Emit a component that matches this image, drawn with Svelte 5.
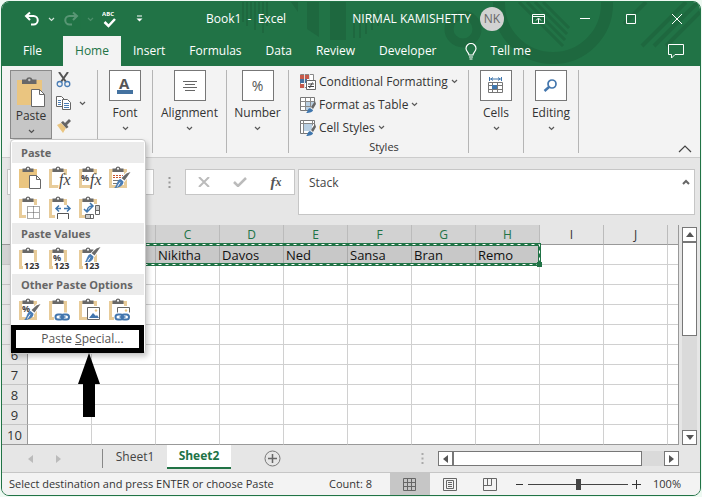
<script lang="ts">
    const tabs = ['File', 'Home', 'Insert', 'Formulas', 'Data', 'Review', 'Developer'];
    const columns = ['A', 'B', 'C', 'D', 'E', 'F', 'G', 'H', 'I', 'J'];
    const rows = [1, 2, 3, 4, 5, 6, 7, 8, 9, 10];
    const names: Record<string, string> = {
        C: 'Nikitha',
        D: 'Davos',
        E: 'Ned',
        F: 'Sansa',
        G: 'Bran',
        H: 'Remo'
    };

    // Columns A to H are inside the copied range
    const selectedCount = 8;

    const pasteMenu = [
        {
            title: 'Paste',
            items: [
                ['all', 'Paste'],
                ['fx', 'Formulas'],
                ['pctfx', 'Formulas and number formatting'],
                ['source', 'Keep source formatting'],
                ['noborder', 'No borders'],
                ['width', 'Keep source column widths'],
                ['transpose', 'Transpose']
            ]
        },
        {
            title: 'Paste Values',
            items: [
                ['values', 'Values'],
                ['pctvalues', 'Values and number formatting'],
                ['srcvalues', 'Values and source formatting']
            ]
        },
        {
            title: 'Other Paste Options',
            items: [
                ['format', 'Formatting'],
                ['link', 'Paste link'],
                ['picture', 'Picture'],
                ['linkpicture', 'Linked picture']
            ]
        }
    ];

    let activeTab = $state('Home');
    let activeSheet = $state('Sheet2');
    let activeView = $state('Normal');
    let zoom = $state(50);
    let formula = $state('Stack');
</script>

{#snippet chevron()}
    <svg class="chevron" width="7" height="5" viewBox="0 0 7 5"><path d="M1 1l2.5 2.5L6 1" fill="none" stroke="currentColor" stroke-width="1.2" /></svg>
{/snippet}

{#snippet brush()}
    <path d="M23 6l-7 9-3-2 6-6z" fill="#fff" stroke="#fff" stroke-width="2" />
    <path d="M22.500 6l-6 8.500-3-2.500 5-4.500z" fill="#6a6a6a" />
    <path d="M12.500 13l3 2.500c0 4-4 6.500-9.500 6.500 3-1.500 2.500-8 6.500-9z" fill="#4a7db5" />
    <path d="M9.500 20.500l2.500-4" stroke="#fff" />
{/snippet}

{#snippet chain()}
    <path d="M6 14.500h17V23H6z" fill="#fff" />
    <g fill="none" stroke="#4376ad" stroke-width="2">
        <rect x="7.500" y="16.500" width="7.500" height="5" rx="2.500" />
        <rect x="13.500" y="16.500" width="7.500" height="5" rx="2.500" />
    </g>
    <path d="M11.500 19h6" stroke="#4376ad" stroke-width="1.500" />
{/snippet}

{#snippet pasteIcon(kind: string)}
    <svg width="24" height="24" viewBox="0 0 24 24" aria-hidden="true">
        {#if kind === 'all'}
            <path d="M1 3h18v19H1z" fill="#eac580" />
        {:else}
            <path d="M2.500 4.500h15v16h-15z" fill="#fff" stroke="#e8cc9a" stroke-width="3" />
        {/if}
        <path d="M4.500 2.500h3a2.600 2.600 0 0 1 5 0h3V6h-11z" fill="#686868" />
        <circle cx="10" cy="2.700" r="1" fill="#fff" />
        {#if kind === 'all'}
            <path d="M11.500 9.500h7l4 4v9h-11z" fill="#fff" stroke="#686868" />
            <path d="M18.500 9.500v4h4" fill="none" stroke="#686868" />
        {:else if kind === 'fx'}
            <path d="M12 9h11v14H10z" fill="#fff" />
            <text class="fx" x="11" y="19">fx</text>
        {:else if kind === 'pctfx'}
            <path d="M14 8h9v15H13z" fill="#fff" />
            <text class="pct" x="3" y="15">%</text>
            <text class="fx" x="12" y="19">fx</text>
        {:else if kind === 'source'}
            <path d="M5 9.500h10M5 11.500h9" stroke="#c6532c" stroke-dasharray="2 1" />
            <path d="M5 14.500h9M5 17.500h5" stroke="#777" />
            {@render brush()}
        {:else if kind === 'noborder'}
            <path d="M8 9h15v14H8z" fill="#fff" />
            <path d="M9.500 10.500h12v12h-12zM9.500 16.500h12M15.500 10.500v12" fill="none" stroke="#555" stroke-dasharray="1 1" />
        {:else if kind === 'width'}
            <path d="M7 9h16v14H7z" fill="#fff" />
            <path d="M8 12.500h5M16 12.500h6M11 9.500l-3 3 3 3M19 9.500l3 3-3 3" fill="none" stroke="#3f76ad" stroke-width="1.500" />
            <path d="M9.500 23v-5.500h11V23" fill="none" stroke="#555" />
        {:else if kind === 'transpose'}
            <path d="M7 8h16v15H7z" fill="#fff" />
            <path d="M9 15.500c0-3 2-5.500 5-5.500M12 7l3 3-3 3M6 13l3 3 3-3" fill="none" stroke="#3f76ad" stroke-width="1.500" />
            <path d="M17.500 9.500h4v9h-4zM7.500 18.500h8v4h-8z" fill="#fff" stroke="#666" />
            <path d="M18 10h3v4h-3zM8 19h4v3H8z" fill="#ccc" />
            <path d="M17.500 14.500h4M12.500 18.500v4" stroke="#666" />
        {:else if kind === 'values' || kind === 'pctvalues' || kind === 'srcvalues'}
            {#if kind === 'pctvalues'}
                <text class="pct" x="5" y="14">%</text>
            {:else if kind === 'srcvalues'}
                <g transform="translate(0 -6)">{@render brush()}</g>
            {/if}
            <path d="M5 15h18v8H5z" fill="#fff" />
            <text class="digits" x="6" y="22">123</text>
        {:else if kind === 'format'}
            <text class="pct" x="4" y="14">%</text>
            {@render brush()}
        {:else if kind === 'link'}
            {@render chain()}
        {:else if kind === 'picture' || kind === 'linkpicture'}
            <path d="M9 8h14v15H9z" fill="#fff" />
            <path d="M9.500 9.500h12v12h-12z" fill="#fff" stroke="#666" />
            <path d="M11 20l4-5 3 3 1-1 2 3z" fill="#4376ad" />
            <circle cx="18" cy="12.500" r="1.200" fill="#eac580" />
            {#if kind === 'linkpicture'}
                {@render chain()}
            {/if}
        {/if}
    </svg>
{/snippet}

<div class="window">
    <header>
        <svg class="pattern" width="470" height="65" viewBox="0 0 470 65" aria-hidden="true">
            <g fill="none" stroke="#1e683f">
                <path d="M13 0v20M17 0v24M21 0v18M25 0v28M29 0v22M33 0v31M37 0v24" stroke-width="2" />
                <path d="M124 12v24M130 10v26M136 8v24M142 8v20M148 8v16" stroke-width="2" />
                <circle cx="233" cy="27" r="14" stroke-width="9" />
                <circle cx="323" cy="2" r="54" stroke-width="12" />
                <path d="M289 0l44 44M297 0l38 38M305 0l32 32M313 0l26 26" stroke-width="3" />
                <path d="M412 44l44-44M424 44l44-44M436 44l34-34M394 22l22-22" stroke-width="4" />
            </g>
            <path d="M61 0h7v10zM77 0h12v35l-12-8zM100 0h16v38h-16z" fill="#1e683f" />
        </svg>
        <div class="title-bar">
            <div class="quick">
                <button aria-label="Undo">
                    <svg width="16" height="16" viewBox="0 0 16 16"><path d="M6 1.500L2 5l4 4M2 5h7.500a4 4 0 0 1 0 8.500H7" fill="none" stroke="#fff" stroke-width="2" /></svg>
                </button>
                <button class="more" aria-label="Undo history">{@render chevron()}</button>
                <button class="dim" aria-label="Redo">
                    <svg width="16" height="16" viewBox="0 0 16 16"><path d="M10 1.500L14 5l-4 4M14 5H6.500a4 4 0 0 0 0 8.500H9" fill="none" stroke="#fff" stroke-width="2" /></svg>
                </button>
                <button class="more dim" aria-label="Redo history">{@render chevron()}</button>
                <button aria-label="Spelling">
                    <svg width="16" height="18" viewBox="0 0 16 18"><text x="0" y="6" class="abc">ABC</text><path d="M2.500 12l4 4L13 9" fill="none" stroke="#fff" stroke-width="2.500" /></svg>
                </button>
                <button class="customize" aria-label="Customize toolbar">
                    <svg width="7" height="8" viewBox="0 0 7 8"><path d="M1 1h5" stroke="#fff" /><path d="M.5 3.500h6l-3 3z" fill="#fff" /></svg>
                </button>
            </div>
            <span class="doc">Book1&nbsp; -&nbsp; Excel</span>
            <span class="user">NIRMAL KAMISHETTY</span>
            <span class="avatar">NK</span>
            <div class="controls">
                <button aria-label="Ribbon display options">
                    <svg width="14" height="12" viewBox="0 0 14 12"><path d="M.5 1.500h12v9H.5zM.5 3.500h12M6.500 10V5.500M4 7.500L6.500 5 9 7.500" fill="none" stroke="#fff" /></svg>
                </button>
                <button aria-label="Minimize">
                    <svg width="10" height="10" viewBox="0 0 10 10"><path d="M0 4.500h10" stroke="#fff" /></svg>
                </button>
                <button aria-label="Maximize">
                    <svg width="10" height="10" viewBox="0 0 10 10"><path d="M.5.5h9v9h-9z" fill="none" stroke="#fff" /></svg>
                </button>
                <button aria-label="Close">
                    <svg width="10" height="10" viewBox="0 0 10 10"><path d="M0 0l10 10M10 0L0 10" stroke="#fff" /></svg>
                </button>
            </div>
        </div>
        <nav class="tabs">
            {#each tabs as tab}
                <button class="tab" class:active={tab === activeTab} onclick={() => (activeTab = tab)}>{tab}</button>
            {/each}
            <button class="tell">
                <svg width="12" height="17" viewBox="0 0 12 17"><path d="M4 12C4 9.500 1 8.500 1 5.500a5 5 0 0 1 10 0C11 8.500 8 9.500 8 12zM4 14h4M4.500 16h3" fill="none" stroke="#fff" stroke-width="1.200" /></svg>
                Tell me
            </button>
            <button class="comments" aria-label="Comments">
                <svg width="17" height="16" viewBox="0 0 17 16"><path d="M.5 1.500h15v10H7L3.500 15v-3.500h-3z" fill="none" stroke="#fff" /></svg>
            </button>
        </nav>
    </header>

    <section class="ribbon" aria-label="Home ribbon">
        <div class="group clipboard">
            <div class="paste-wrap">
                <button class="paste">
                    <svg width="30" height="32" viewBox="0 0 30 32"><path d="M1 4h25v25H1z" fill="#eac580" /><path d="M6 3.500h4a3.500 3.500 0 0 1 6.500 0h4V8H6z" fill="#686868" /><circle cx="13.300" cy="4" r="1.200" fill="#c6c6c6" /><path d="M15.500 13.500h8l5 5v12h-13z" fill="#fff" stroke="#686868" /><path d="M23.500 13.500v5h5" fill="none" stroke="#686868" /></svg>
                    <span>Paste</span>
                    {@render chevron()}
                </button>
                <div class="menu" role="menu">
                    {#each pasteMenu as section}
                        <h2>{section.title}</h2>
                        <div class="options">
                            {#each section.items as [kind, label]}
                                <button role="menuitem" aria-label={label}>{@render pasteIcon(kind)}</button>
                            {/each}
                        </div>
                    {/each}
                    <button class="special" role="menuitem"><span>Paste <u>S</u>pecial...</span></button>
                    <svg class="arrow" width="22" height="64" viewBox="0 0 22 64" aria-hidden="true"><path d="M11 0l11 31h-5v33H5V31H0z" /></svg>
                </div>
            </div>
            <div class="clip-tools">
                <button aria-label="Cut">
                    <svg width="16" height="16" viewBox="0 0 16 16"><path d="M3 0l7 10M12 0L5 10" stroke="#555" stroke-width="2" /><g fill="none" stroke="#4a7db5" stroke-width="1.300"><circle cx="3.700" cy="12" r="2.500" /><circle cx="11.300" cy="12" r="2.500" /></g></svg>
                </button>
                <button aria-label="Copy">
                    <svg width="16" height="16" viewBox="0 0 16 16"><path d="M.5 1.500h5l3 3v7h-8z" fill="#fff" stroke="#666" /><path d="M2 5.500h3M2 7.500h3M2 9.500h3" stroke="#4a7db5" /><path d="M6.500 4.500h5l3 3v7h-8z" fill="#fff" stroke="#666" /><path d="M8 8.500h5M8 10.500h5M8 12.500h5" stroke="#4a7db5" /></svg>
                    {@render chevron()}
                </button>
                <button aria-label="Format painter">
                    <svg width="16" height="16" viewBox="0 0 16 16"><path d="M1 7l4-2 5 5-3 5z" fill="#eac580" /><path d="M5 4.500l2-1.500 2 2L13 1l2 2-4 4 1.500 2-2 1.500z" fill="#666" /></svg>
                </button>
            </div>
        </div>

        <div class="group">
            <button class="big">
                <span class="box"><svg width="20" height="20" viewBox="0 0 20 20"><text x="4" y="13" class="letter">A</text><path d="M2 14h16v4H2z" fill="#4472a0" /></svg></span>
                Font {@render chevron()}
            </button>
        </div>
        <div class="group wide">
            <button class="big">
                <span class="box"><svg width="16" height="14" viewBox="0 0 16 14"><path d="M1 2.500h14M3 5.500h10M1 8.500h14M3 11.500h10" stroke="#666" /></svg></span>
                Alignment {@render chevron()}
            </button>
        </div>
        <div class="group number">
            <button class="big">
                <span class="box percent">%</span>
                Number {@render chevron()}
            </button>
        </div>

        <div class="group styles">
            <button>
                <svg width="16" height="16" viewBox="0 0 16 16"><path d="M.5.5h13v13H.5z" fill="#fff" stroke="#888" /><path d="M0 1h9v4H0zM0 10h5v4H0z" fill="#c65a4a" /><path d="M0 5h7v4H0z" fill="#4472a0" /><path d="M4.500 0v14M9.500 0v6" stroke="#ddd" /><path d="M6.500 6.500h9v9h-9z" fill="#fff" stroke="#666" /><path d="M8 10h6M8 12.500h6M12.500 8.500l-3 5.500" stroke="#444" /></svg>
                Conditional Formatting {@render chevron()}
            </button>
            <button>
                <svg width="16" height="16" viewBox="0 0 16 16"><path d="M.5.5h14v13H.5z" fill="#fff" stroke="#777" /><path d="M5 4h9v9H5z" fill="#b9cfe2" /><path d="M.5 4.500h14M.5 9.500h14M5.500.5v13M10.500.5v13" stroke="#888" /><path d="M16 4l-6 7-2 5h8z" fill="#f3f3f3" /><path d="M15 4l-4 6 2 2 3-5z" fill="#666" /><path d="M10 11l3 2c0 2-3 3-7 3 2-1 1-4 4-5z" fill="#3f76ad" /></svg>
                Format as Table {@render chevron()}
            </button>
            <button>
                <svg width="16" height="16" viewBox="0 0 16 16"><path d="M.5.5h14v13H.5z" fill="#fff" stroke="#777" /><path d="M4 4h8v7H4z" fill="#b9cfe2" /><path d="M.5 3.500h14M3.500.5v13M12.500.5v5" stroke="#888" /><path d="M16 4l-6 7-2 5h8z" fill="#f3f3f3" /><path d="M15 4l-4 6 2 2 3-5z" fill="#666" /><path d="M10 11l3 2c0 2-3 3-7 3 2-1 1-4 4-5z" fill="#3f76ad" /></svg>
                Cell Styles {@render chevron()}
            </button>
            <span class="caption">Styles</span>
        </div>

        <div class="group">
            <button class="big">
                <span class="box"><svg width="16" height="17" viewBox="0 0 16 17"><path d="M1.500 0v4M13.500 0v4M2 2h11M5 .5L3 2l2 1.500M10 .5L12 2l-2 1.500" fill="none" stroke="#3f76ad" /><path d="M.5 5.500h14v10H.5zM.5 8.500h14M.5 12.500h14M4.500 5.500v10M9.500 5.500v10" fill="none" stroke="#777" /><path d="M4 8h5v4H4z" fill="#3f76ad" /></svg></span>
                Cells {@render chevron()}
            </button>
        </div>
        <div class="group">
            <button class="big">
                <span class="box"><svg width="16" height="16" viewBox="0 0 16 16"><circle cx="9" cy="6" r="4" fill="none" stroke="#4376ad" stroke-width="1.700" /><path d="M6 9l-4.500 4" stroke="#4376ad" stroke-width="2.500" /></svg></span>
                Editing {@render chevron()}
            </button>
        </div>
        <button class="collapse" aria-label="Collapse the ribbon">
            <svg width="14" height="8" viewBox="0 0 14 8"><path d="M1 7l6-6 6 6" fill="none" stroke="#444" stroke-width="1.200" /></svg>
        </button>
    </section>

    <section class="formula-bar">
        <input class="name-box" aria-label="Name box" />
        <svg class="dots" width="3" height="11" viewBox="0 0 3 11"><path d="M1.500 0v11" stroke="#999" stroke-width="2" stroke-dasharray="2 2.500" /></svg>
        <div class="entry">
            <button aria-label="Cancel"><svg width="12" height="10" viewBox="0 0 12 10"><path d="M1 0l10 10M11 0L1 10" stroke="#bbb" stroke-width="2" /></svg></button>
            <button aria-label="Enter"><svg width="14" height="10" viewBox="0 0 14 10"><path d="M1 5l4 4 8-8" fill="none" stroke="#bbb" stroke-width="2.500" /></svg></button>
            <button class="insert-fn" aria-label="Insert function">f<small>x</small></button>
        </div>
        <div class="formula">
            <textarea aria-label="Formula" bind:value={formula}></textarea>
            <button aria-label="Collapse formula bar"><svg width="8" height="6" viewBox="0 0 8 6"><path d="M1 5l3-3 3 3" fill="none" stroke="#666" stroke-width="2" /></svg></button>
        </div>
    </section>

    <main>
        <div class="grid">
            <table>
                <thead>
                    <tr>
                        <th class="corner"></th>
                        {#each columns as col, i}
                            <th scope="col" class:selected={i < selectedCount}>{col}</th>
                        {/each}
                        <th class="rest"></th>
                    </tr>
                </thead>
                <tbody>
                    {#each rows as row}
                        <tr>
                            <th scope="row" class:selected={row === 1}>{row}</th>
                            {#each columns as col, i}
                                <td class:selected={row === 1 && i < selectedCount}>{row === 1 ? (names[col] ?? '') : ''}</td>
                            {/each}
                            <td></td>
                        </tr>
                    {/each}
                </tbody>
            </table>
            <svg class="ants" width="518" height="26" viewBox="0 0 518 26" aria-hidden="true">
                <g fill="none">
                    <rect x="2.500" y="2.500" width="512" height="20" stroke="#217346" stroke-width="3" />
                    <rect x="2.500" y="2.500" width="512" height="20" stroke="#fff" stroke-dasharray="3 4" />
                </g>
                <path d="M512 20h5v5h-5z" fill="#217346" />
            </svg>
        </div>
        <div class="vscroll">
            <button aria-label="Scroll up"><svg width="8" height="5" viewBox="0 0 8 5"><path d="M0 5l4-5 4 5z" fill="#555" /></svg></button>
            <div class="thumb"></div>
            <button class="end" aria-label="Scroll down"><svg width="8" height="5" viewBox="0 0 8 5"><path d="M0 0l4 5 4-5z" fill="#555" /></svg></button>
        </div>
    </main>

    <section class="sheet-bar">
        <div class="sheet-nav">
            <button aria-label="Previous sheet"><svg width="5" height="8" viewBox="0 0 5 8"><path d="M5 0v8L0 4z" fill="#bbb" /></svg></button>
            <button aria-label="Next sheet"><svg width="5" height="8" viewBox="0 0 5 8"><path d="M0 0v8l5-4z" fill="#bbb" /></svg></button>
        </div>
        {#each ['Sheet1', 'Sheet2'] as sheet}
            <button class="sheet" class:active={sheet === activeSheet} onclick={() => (activeSheet = sheet)}>{sheet}</button>
        {/each}
        <button class="add" aria-label="New sheet">
            <svg width="17" height="17" viewBox="0 0 17 17"><circle cx="8.500" cy="8.500" r="7.500" fill="none" stroke="#777" /><path d="M4 8.500h9M8.500 4v9" stroke="#666" stroke-width="1.500" /></svg>
        </button>
        <svg class="dots" width="3" height="11" viewBox="0 0 3 11"><path d="M1.500 0v11" stroke="#aaa" stroke-width="2" stroke-dasharray="2 2.500" /></svg>
        <div class="hscroll">
            <button aria-label="Scroll left"><svg width="5" height="8" viewBox="0 0 5 8"><path d="M5 0v8L0 4z" fill="#555" /></svg></button>
            <div class="thumb"></div>
            <button class="end" aria-label="Scroll right"><svg width="5" height="8" viewBox="0 0 5 8"><path d="M0 0v8l5-4z" fill="#555" /></svg></button>
        </div>
    </section>

    <footer>
        <span class="message">Select destination and press ENTER or choose Paste</span>
        <span class="count">Count: 8</span>
        <div class="views">
            <button class:active={activeView === 'Normal'} aria-label="Normal" onclick={() => (activeView = 'Normal')}>
                <svg width="14" height="13" viewBox="0 0 14 13"><path d="M.5.5h12v12H.5zM.5 4.500h12M.5 8.500h12M4.500.5v12M8.500.5v12" fill="none" stroke="#666" /></svg>
            </button>
            <button class:active={activeView === 'Layout'} aria-label="Page layout" onclick={() => (activeView = 'Layout')}>
                <svg width="14" height="13" viewBox="0 0 14 13"><path d="M.5.5h13v12H.5zM3.500 2.500h7v8h-7zM5 4.500h4M5 6.500h4M5 8.500h4" fill="none" stroke="#666" /></svg>
            </button>
            <button class:active={activeView === 'Break'} aria-label="Page break preview" onclick={() => (activeView = 'Break')}>
                <svg width="14" height="13" viewBox="0 0 14 13"><path d="M.5.5h13v12H.5zM.5 7.500h8V.5M4.500.5v7" fill="none" stroke="#666" /></svg>
            </button>
        </div>
        <div class="zoom">
            <button aria-label="Zoom out"><svg width="9" height="9" viewBox="0 0 9 9"><path d="M1 4.500h7" stroke="#333" /></svg></button>
            <input type="range" aria-label="Zoom" min="0" max="100" bind:value={zoom} />
            <button aria-label="Zoom in"><svg width="9" height="9" viewBox="0 0 9 9"><path d="M0 4.500h9M4.500 0v9" stroke="#333" /></svg></button>
        </div>
        <span class="percent-label">{zoom * 2}%</span>
    </footer>
</div>

<style>
    :global(body) {
        background: #eef9f2;
    }

    .window {
        margin: 1px;
        border: 1px solid #217346;
        border-radius: 8px;
        overflow: hidden;
        background: #e6e6e6;
        font-family: 'Open Sans', 'Noto Sans', sans-serif;
        font-size: 12px;
        line-height: 16px;
        color: #333;
    }

    button {
        display: flex;
        align-items: center;
        justify-content: center;
        padding: 0;
        border: 0;
        background: none;
        color: inherit;
        font: inherit;
        white-space: nowrap;
    }

    svg {
        flex: none;
    }

    /* Title bar and tabs */
    header {
        position: relative;
        background: #217346;
        color: #fff;
    }

    .pattern {
        position: absolute;
        top: 0;
        right: 0;
    }

    .title-bar {
        position: relative;
        display: flex;
        align-items: center;
        height: 34px;
    }

    .quick {
        display: flex;
        align-items: center;
        width: 204px;
        padding-left: 22px;
        box-sizing: border-box;
    }

    .more {
        width: 23px;
    }

    .dim {
        opacity: 0.25;
    }

    .customize {
        margin-left: 18px;
    }

    .abc {
        font: bold 6px 'Open Sans', sans-serif;
        fill: #fff;
    }

    .user {
        margin-left: auto;
    }

    .avatar {
        width: 24px;
        margin-left: 9px;
        border-radius: 50%;
        background: #d2d2d2;
        color: #666;
        line-height: 24px;
        text-align: center;
    }

    .controls {
        display: flex;
        margin-left: 12px;
    }

    .controls button {
        width: 46px;
        height: 32px;
    }

    .tabs {
        position: relative;
        display: flex;
        height: 30px;
    }

    .tab {
        padding: 0 12px;
    }

    .tab:first-child {
        width: 61px;
        padding: 0;
    }

    .tab.active {
        width: 58px;
        padding: 0;
        background: #f3f3f3;
        color: #217346;
    }

    .tell {
        gap: 14px;
        margin-left: 16px;
    }

    .comments {
        margin: 0 15px 0 auto;
    }

    /* Ribbon */
    .ribbon {
        display: flex;
        height: 92px;
        padding: 4px 0;
        box-sizing: border-box;
        border-bottom: 1px solid #ccc;
        background: #f3f3f3;
    }

    .chevron {
        opacity: 0.8;
    }

    .group {
        width: 55px;
        box-sizing: border-box;
        border-right: 1px solid #b5b5b5;
    }

    .group.clipboard {
        display: flex;
        width: 96px;
        padding-left: 8px;
    }

    .group.wide {
        width: 74px;
    }

    .group.number {
        width: 62px;
    }

    .big {
        flex-direction: column;
        width: 100%;
    }

    .big .chevron,
    .paste .chevron {
        margin-top: 5px;
    }

    .box {
        display: flex;
        align-items: center;
        justify-content: center;
        width: 30px;
        height: 29px;
        margin-bottom: 4px;
        border: 1px solid #777;
        background: #fff;
    }

    .box.percent {
        color: #555;
        font-size: 14px;
    }

    .letter {
        font: bold 15px 'Open Sans', sans-serif;
        fill: #555;
    }

    .paste-wrap {
        position: relative;
    }

    .paste {
        flex-direction: column;
        width: 42px;
        height: 69px;
        border: 1px solid #8a8a8a;
        background: #c6c6c6;
    }

    .clip-tools {
        display: flex;
        flex-direction: column;
        gap: 7px;
        padding: 2px 0 0 4px;
    }

    .clip-tools button {
        gap: 7px;
        justify-content: flex-start;
    }

    .styles {
        display: flex;
        flex-direction: column;
        align-items: flex-start;
        width: 180px;
        padding-left: 11px;
    }

    .styles button {
        gap: 3px;
        height: 23px;
    }

    .caption {
        width: 100%;
        margin-top: auto;
        font-size: 11px;
        line-height: 12px;
        text-align: center;
    }

    .collapse {
        align-self: flex-end;
        margin: 0 8px 0 auto;
    }

    /* Paste menu */
    .menu {
        position: absolute;
        top: 69px;
        left: 0;
        z-index: 2;
        width: 136px;
        box-sizing: border-box;
        padding: 2px 0 0;
        border: 1px solid #c8c8c8;
        border-radius: 4px;
        background: #fff;
        box-shadow: 2px 3px 5px rgba(0, 0, 0, 0.2);
    }

    h2 {
        margin: 0 1px;
        padding-left: 9px;
        background: #ebebeb;
        color: #666;
        font-size: 11px;
        line-height: 21px;
    }

    .options {
        display: flex;
        flex-wrap: wrap;
        padding-left: 4px;
    }

    .options button {
        width: 30px;
        height: 30px;
    }

    .fx {
        font: italic 16px / 1 'Liberation Serif', serif;
        fill: #444;
    }

    .pct {
        font: bold 9px / 1 'Open Sans', sans-serif;
        fill: #444;
    }

    .digits {
        font: bold 9px / 1 'Open Sans', sans-serif;
        fill: #333;
    }

    .special {
        width: 133px;
        height: 28px;
        padding-left: 10px;
        border: 5px solid #000;
        color: #555;
    }

    .arrow {
        position: absolute;
        top: 100%;
        left: 67px;
    }

    /* Formula bar */
    .formula-bar {
        display: flex;
        align-items: flex-start;
        padding: 11px 5px 10px;
    }

    .name-box {
        width: 147px;
        height: 26px;
        padding: 0;
        box-sizing: border-box;
        border: 1px solid #c6c6c6;
        background: #fff;
    }

    .formula-bar .dots {
        margin: 8px 14px;
    }

    .entry {
        display: flex;
        justify-content: space-around;
        width: 110px;
        height: 26px;
        box-sizing: border-box;
        border: 1px solid #c6c6c6;
        background: #fff;
    }

    .entry button {
        width: 36px;
    }

    .insert-fn {
        color: #555;
        font: italic bold 15px 'Liberation Serif', serif;
    }

    .insert-fn small {
        font-size: 12px;
    }

    .formula {
        display: flex;
        flex: 1;
        align-items: flex-start;
        height: 46px;
        margin-left: 3px;
        box-sizing: border-box;
        border: 1px solid #c6c6c6;
        background: #fff;
    }

    textarea {
        flex: 1;
        height: 44px;
        padding: 5px 10px;
        box-sizing: border-box;
        border: 0;
        outline: 0;
        resize: none;
        background: none;
        color: #444;
        font: inherit;
    }

    .formula button {
        margin: 9px 4px;
    }

    /* Worksheet */
    main {
        display: flex;
    }

    .grid {
        position: relative;
        flex: 1;
        border-right: 1px solid #999;
    }

    table {
        width: 100%;
        table-layout: fixed;
        border-collapse: separate;
        border-spacing: 0;
    }

    th,
    td {
        width: 64px;
        height: 20px;
        padding: 0;
        box-sizing: border-box;
        overflow: hidden;
        font-weight: normal;
        white-space: nowrap;
    }

    td {
        padding-left: 2px;
        border-right: 1px solid #d0d0d0;
        border-bottom: 1px solid #d0d0d0;
        background: #fff;
        color: #111;
        font-size: 13px;
    }

    td:last-child {
        border-right: 0;
    }

    tbody tr:last-child th,
    tbody tr:last-child td {
        border-bottom-color: #999;
    }

    thead th {
        border-right: 1px solid #bbb;
        border-bottom: 1px solid #999;
    }

    th.corner {
        width: 26px;
    }

    thead th.rest {
        width: auto;
        border-right: 0;
    }

    tbody th {
        border-right: 1px solid #999;
        border-bottom: 1px solid #c4c4c4;
        font-size: 13px;
    }

    th.selected {
        background: #d2d2d2;
        color: #217346;
    }

    td.selected {
        border-right-color: #aaa;
        background: #c8c8c8;
    }

    .ants {
        position: absolute;
        top: 17px;
        left: 23px;
    }

    .vscroll {
        display: flex;
        flex-direction: column;
        width: 15px;
        margin: 2px 3px 0 3px;
        background: #dadada;
    }

    .vscroll button,
    .hscroll button,
    .thumb {
        width: 15px;
        height: 15px;
        box-sizing: border-box;
        border: 1px solid #777;
        background: #fff;
    }

    .vscroll .thumb {
        height: 94px;
    }

    .vscroll .end {
        margin-top: auto;
    }

    /* Sheet tabs */
    .sheet-bar {
        display: flex;
        align-items: center;
        height: 27px;
        border-bottom: 1px solid #c6c6c6;
    }

    .sheet-nav {
        display: flex;
        gap: 23px;
        width: 101px;
        height: 19px;
        padding-left: 26px;
        box-sizing: border-box;
        border-right: 1px solid #888;
    }

    .sheet {
        width: 64px;
        height: 24px;
        align-self: flex-start;
        color: #444;
        font-size: 12px;
    }

    .sheet.active {
        border-bottom: 2px solid #217346;
        background: #fff;
        color: #217346;
        font-weight: bold;
    }

    .add {
        margin-left: 33px;
    }

    .sheet-bar .dots {
        margin-left: auto;
    }

    .hscroll {
        display: flex;
        width: 241px;
        margin: 0 21px 0 14px;
        background: #dadada;
    }

    .hscroll .thumb {
        width: 189px;
    }

    .hscroll .end {
        margin-left: auto;
    }

    /* Status bar */
    footer {
        display: flex;
        align-items: center;
        height: 22px;
        background: #f3f3f3;
        font-size: 11px;
    }

    .message {
        flex: 1;
        padding-left: 7px;
        white-space: nowrap;
    }

    .count {
        margin-right: 18px;
    }

    .views {
        display: flex;
    }

    .views button {
        width: 40px;
        height: 22px;
    }

    .views .active {
        background: #c6c6c6;
    }

    .zoom {
        display: flex;
        gap: 4px;
        margin-left: 5px;
    }

    input[type='range'] {
        width: 100px;
        height: 12px;
        margin: 0;
        appearance: none;
        background: linear-gradient(#444, #444) center / 100% 1px no-repeat;
    }

    input[type='range']::-webkit-slider-thumb {
        width: 5px;
        height: 11px;
        appearance: none;
        background: #444;
    }

    .percent-label {
        margin: 0 19px 0 12px;
    }
</style>
